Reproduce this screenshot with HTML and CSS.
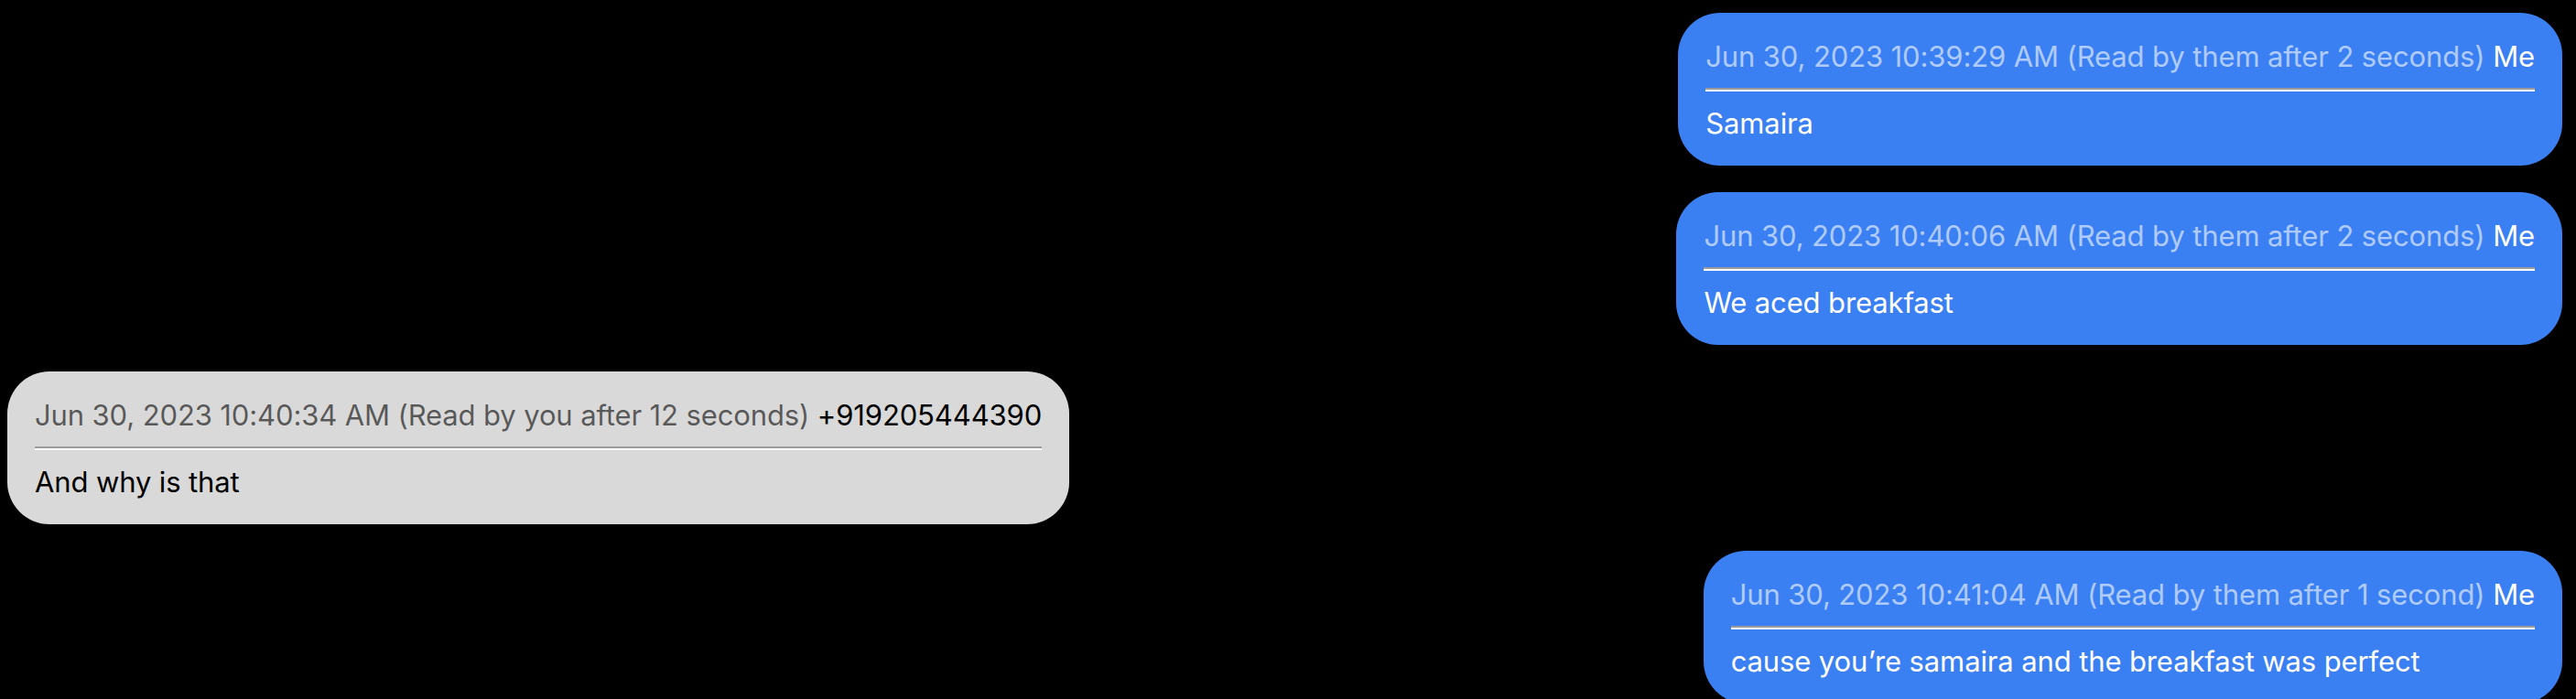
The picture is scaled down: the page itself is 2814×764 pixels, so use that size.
FILE: index.html
```html
<!DOCTYPE html>
<html lang="en">
<head>
<meta charset="utf-8">
<title>Messages</title>
<link rel="stylesheet" href="styles.css">
</head>
<body>
<div class="thread">
  <div class="msg msg-me">
    <div class="meta"><span class="stamp">Jun 30, 2023 10:39:29 AM (Read by them after 2 seconds)</span> <span class="who">Me</span></div>
    <hr class="rule">
    <div class="text">Samaira</div>
  </div>
  <div class="msg msg-me">
    <div class="meta"><span class="stamp">Jun 30, 2023 10:40:06 AM (Read by them after 2 seconds)</span> <span class="who">Me</span></div>
    <hr class="rule">
    <div class="text">We aced breakfast</div>
  </div>
  <div class="msg msg-them">
    <div class="meta"><span class="stamp">Jun 30, 2023 10:40:34 AM (Read by you after 12 seconds)</span> <span class="who">+919205444390</span></div>
    <hr class="rule">
    <div class="text">And why is that</div>
  </div>
  <div class="msg msg-me">
    <div class="meta"><span class="stamp">Jun 30, 2023 10:41:04 AM (Read by them after 1 second)</span> <span class="who">Me</span></div>
    <hr class="rule">
    <div class="text">cause you’re samaira and the breakfast was perfect</div>
  </div>
</div>
</body>
</html>
```
FILE: styles.css
```css
html, body {
  margin: 0;
  background: #000;
}
body {
  font-family: Inter, "Noto Sans", "Liberation Sans", sans-serif;
  font-size: 31px;
  letter-spacing: -0.12px;
}
.thread {
  display: flex;
  flex-direction: column;
  gap: 29px;
  padding: 14px 15px 0 8px;
}
.msg {
  max-width: 80%;
  padding: 29px 30px 28px 30px;
  border-radius: 46px;
}
.msg-me {
  align-self: flex-end;
  background: #3b80f2;
  color: #fff;
}
.msg-me .stamp {
  color: rgba(255, 255, 255, 0.6);
}
.msg-them {
  align-self: flex-start;
  background: #d9d9d9;
  color: #000;
}
.msg-them .stamp {
  color: rgba(0, 0, 0, 0.6);
}
.rule {
  height: 0;
  margin: 16px 0;
  border: 0;
  border-top: 2px solid #9b9b9b;
  border-bottom: 2px solid #fff;
}
.meta, .text {
  white-space: nowrap;
}
```
